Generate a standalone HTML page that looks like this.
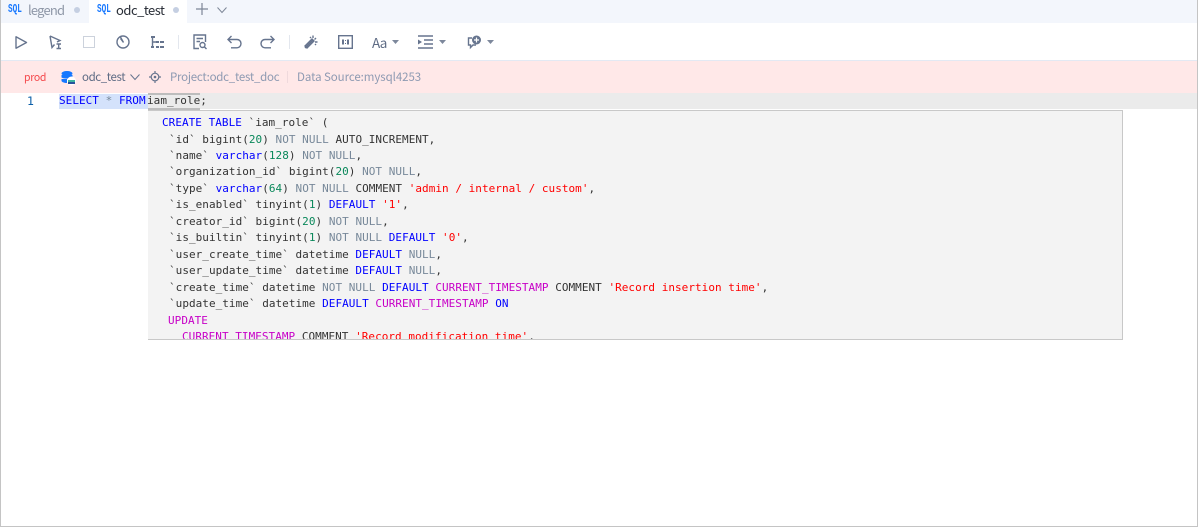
<!DOCTYPE html>
<html>
<head>
<meta charset="utf-8">
<style>
html,body{margin:0;padding:0;width:1198px;height:527px;overflow:hidden;background:#fff}
#r{position:relative;width:1198px;height:527px;overflow:hidden;font-family:"Noto Sans CJK SC","Liberation Sans",sans-serif;background:#fff}
.a{position:absolute}
.t{position:absolute;white-space:pre}
.m{font-family:"DejaVu Sans Mono","Liberation Mono",monospace;font-size:11px;line-height:16px;color:#333;letter-spacing:.035px}
.k{color:#0000ff}.g{color:#778899}.n{color:#09885a}.s{color:#ff0000}.p{color:#c700c7}
.q{font:bold 12px/13px "Liberation Mono",monospace;color:#1677ff;transform:scaleX(.64);transform-origin:0 0}
svg{position:absolute;overflow:visible}
.i{fill:none;stroke:#66748e;stroke-width:1.4}
</style>
</head>
<body>
<div id="r">
<!-- tabs -->
<div class="a" style="left:0;top:0;width:1198px;height:23px;background:#f3f6fc"></div>
<div class="a" style="left:89px;top:0;width:98px;height:23px;background:#fff"></div>
<div class="t q" style="left:8px;top:3px">SQL</div>
<div class="t" style="left:28px;top:1px;font-size:13px;line-height:18px;letter-spacing:-.8px;color:#8f98a8">legend</div>
<div class="a" style="left:74px;top:7px;width:6px;height:6px;border-radius:50%;background:#c5cfe2"></div>
<div class="t q" style="left:97px;top:3px">SQL</div>
<div class="t" style="left:116px;top:1px;font-size:13px;line-height:18px;letter-spacing:-.5px;color:#2a2f38">odc_test</div>
<div class="a" style="left:173px;top:7px;width:6px;height:6px;border-radius:50%;background:#c5cfe2"></div>
<svg style="left:196px;top:3px" width="12" height="12"><path d="M6 0V12M0 6H12" stroke="#7d8697" stroke-width="1.2" fill="none"/></svg>
<svg style="left:217px;top:7px" width="10" height="6"><path d="M.5 .5L5 5.500L9.500 .5" stroke="#7d8697" stroke-width="1" fill="none"/></svg>

<!-- toolbar icons -->
<svg style="left:15px;top:36px" width="12" height="13"><path class="i" d="M1 .8L11.500 6.500L1 12.200Z" stroke-linejoin="round"/></svg>
<svg style="left:49px;top:35px" width="13" height="14"><path class="i" d="M1 1L11 5.500L8 7M1 1L3 12.500L5.500 9.500"/><path class="i" d="M7.500 9H12M9.700 9V13.500M7.500 13.500H12" stroke-width="1"/></svg>
<div class="a" style="left:83px;top:36px;width:10px;height:10px;border:1px solid #ccd2dc"></div>
<svg style="left:116px;top:35px" width="14" height="14"><circle class="i" cx="7" cy="7" r="6"/><path class="i" d="M4.500 3.500L7.500 7.500L4 1.200"/></svg>
<svg style="left:151px;top:36px" width="13" height="13"><path d="M0 0H4V2H0ZM0 10H3V12H0ZM5 5H8V7H5ZM9 5H13V7H9ZM5 10H8V12H5ZM9 10H13V12H9Z" fill="#66748e"/><path class="i" d="M1.500 2V11M1.500 6H5"/></svg>
<div class="a" style="left:178px;top:35px;width:1px;height:14px;background:#e3e7ee"></div>
<svg style="left:193px;top:34px" width="14" height="16"><path class="i" d="M6 14.500H1V1H12.500V8"/><path class="i" d="M3.500 4.500H10M3.500 7.500H7"/><circle class="i" cx="9.500" cy="11" r="2.500"/><path class="i" d="M11.500 13L13.500 15"/></svg>
<svg style="left:227px;top:35px" width="15" height="14"><path class="i" d="M4.500 1L1 4.500L4.500 8M1 4.500H10C12 4.500 14 6 14 8.500C14 11 12 12.800 10 12.800H4"/></svg>
<svg style="left:260px;top:35px" width="15" height="14"><path class="i" d="M10.500 1L14 4.500L10.500 8M14 4.500H5C3 4.500 1 6 1 8.500C1 11 3 12.800 5 12.800H11"/></svg>
<div class="a" style="left:289px;top:35px;width:1px;height:14px;background:#e3e7ee"></div>
<svg style="left:304px;top:35px" width="14" height="14"><path class="i" d="M1 13L9 5M3 13L10 6L8 4L1 11Z" stroke-width="1.100"/><path class="i" d="M9 .5V3M12 3L10.500 4.500M13.500 7H11M6 2L7 3M12 10L11 9" stroke-width="1"/></svg>
<svg style="left:338px;top:35px" width="15" height="14"><rect x=".7" y=".7" width="13.600" height="12.600" fill="none" stroke="#66748e" stroke-width="1.400"/><path d="M4 4.500H6V9.500H4ZM9 4.500H11V9.500H9ZM7 5H8V6H7ZM7 8H8V9H7Z" fill="#66748e"/></svg>
<div class="t" style="left:372px;top:33px;font-size:13.500px;line-height:19px;letter-spacing:-.8px;color:#5f6c85">Aa</div>
<svg style="left:392px;top:40px" width="7" height="4"><path d="M0 0H7L3.500 4Z" fill="#7d889c"/></svg>
<svg style="left:418px;top:35px" width="15" height="14"><path class="i" d="M0 1H15M6 5H15M6 9H15M0 13H15"/><path d="M0 4.500L4 7L0 9.500Z" fill="#66748e"/></svg>
<svg style="left:439px;top:40px" width="7" height="4"><path d="M0 0H7L3.500 4Z" fill="#7d889c"/></svg>
<svg style="left:467px;top:35px" width="15" height="14"><path class="i" d="M5 3H1.500V10H3.500V12.500L6 10H9"/><circle cx="9.500" cy="5" r="4.500" fill="#66748e"/><path d="M9.500 2.500V7.500M7 5H12" stroke="#fff" stroke-width="1.200"/></svg>
<svg style="left:487px;top:40px" width="7" height="4"><path d="M0 0H7L3.500 4Z" fill="#7d889c"/></svg>

<!-- info bar -->
<div class="a" style="left:1px;top:60px;width:1197px;height:1px;background:#e3e9f3"></div>
<div class="a" style="left:1px;top:61px;width:1197px;height:32px;background:#ffe8e8"></div>
<div class="t" style="left:24px;top:70px;font-size:10.500px;line-height:16px;letter-spacing:-.3px;color:#f5494c">prod</div>
<svg style="left:61px;top:71px" width="16" height="15"><ellipse cx="6" cy="2.500" rx="5.500" ry="2.500" fill="#1677ff"/><path d="M.5 4H11.500V6.500C9 8 3 8 .5 6.500ZM.5 8H6V12C3 12 1 11 .5 10Z" fill="#1677ff"/><circle cx="10.500" cy="10" r="4.500" fill="#fff"/><path d="M7 9H14V11H7Z" fill="#3cb4a0"/><path d="M7 11H14V13H7Z" fill="#27539c"/></svg>
<div class="t" style="left:82px;top:69px;font-size:11.500px;line-height:17px;letter-spacing:-.4px;color:#5f6c85">odc_test</div>
<svg style="left:130px;top:74px" width="10" height="6"><path d="M.5 .5L5 5.500L9.500 .5" stroke="#66748e" stroke-width="1" fill="none"/></svg>
<svg style="left:149px;top:71px" width="12" height="12"><circle cx="6" cy="6" r="3.800" fill="none" stroke="#66748e" stroke-width="1.200"/><circle cx="6" cy="6" r="1.300" fill="#66748e"/><path d="M6 0V2M6 10V12M0 6H2M10 6H12" stroke="#66748e" stroke-width="1.200"/></svg>
<div class="t" style="left:170px;top:69px;font-size:11.500px;line-height:17px;letter-spacing:-.25px;color:#8e9ab2">Project:odc_test_doc</div>
<div class="a" style="left:287px;top:71px;width:1px;height:12px;background:#efd9dc"></div>
<div class="t" style="left:297px;top:69px;font-size:11.500px;line-height:17px;letter-spacing:-.07px;color:#8e9ab2">Data Source:mysql4253</div>

<!-- editor -->
<div class="a" style="left:148px;top:93px;width:1049px;height:16px;background:#ebebeb"></div>
<div class="a" style="left:59px;top:94px;width:89px;height:15px;background:#d4e2fb"></div>
<div class="a" style="left:148px;top:93px;width:52px;height:2px;background:#bdbdbd"></div>
<div class="a" style="left:148px;top:108px;width:52px;height:2px;background:#bdbdbd"></div>
<div class="t m" style="left:27px;top:93px;color:#0b5fa8;font-size:11.500px">1</div>
<div class="t m" style="left:59px;top:93px"><span class="k">SELECT</span> <span class="g">*</span> <span class="k">FROM</span></div>
<div class="t m" style="left:147px;top:93px">iam_role;</div>

<!-- hover popup -->
<div class="a" style="left:148px;top:110px;width:975px;height:230px;background:#f3f3f3;border-top:1px solid #c8c8c8;border-right:1px solid #c8c8c8;border-bottom:1px solid #c8c8c8;box-sizing:border-box;overflow:hidden">
<div class="t m" style="left:14px;top:4px"><span class="k">CREATE TABLE</span> `iam_role` (</div>
<div class="t m" style="left:21px;top:21px">`id` bigint(<span class="n">20</span>) <span class="g">NOT NULL</span> AUTO_INCREMENT,</div>
<div class="t m" style="left:21px;top:37px">`name` <span class="k">varchar</span>(<span class="n">128</span>) <span class="g">NOT NULL</span>,</div>
<div class="t m" style="left:21px;top:53px">`organization_id` bigint(<span class="n">20</span>) <span class="g">NOT NULL</span>,</div>
<div class="t m" style="left:21px;top:70px">`type` <span class="k">varchar</span>(<span class="n">64</span>) <span class="g">NOT NULL</span> COMMENT <span class="s">'admin / internal / custom'</span>,</div>
<div class="t m" style="left:21px;top:86px">`is_enabled` tinyint(<span class="n">1</span>) <span class="k">DEFAULT</span> <span class="s">'1'</span>,</div>
<div class="t m" style="left:21px;top:103px">`creator_id` bigint(<span class="n">20</span>) <span class="g">NOT NULL</span>,</div>
<div class="t m" style="left:21px;top:119px">`is_builtin` tinyint(<span class="n">1</span>) <span class="g">NOT NULL</span> <span class="k">DEFAULT</span> <span class="s">'0'</span>,</div>
<div class="t m" style="left:21px;top:136px">`user_create_time` datetime <span class="k">DEFAULT</span> <span class="g">NULL</span>,</div>
<div class="t m" style="left:21px;top:152px">`user_update_time` datetime <span class="k">DEFAULT</span> <span class="g">NULL</span>,</div>
<div class="t m" style="left:21px;top:169px">`create_time` datetime <span class="g">NOT NULL</span> <span class="k">DEFAULT</span> <span class="p">CURRENT_TIMESTAMP</span> COMMENT <span class="s">'Record insertion time'</span>,</div>
<div class="t m" style="left:21px;top:185px">`update_time` datetime <span class="k">DEFAULT</span> <span class="p">CURRENT_TIMESTAMP</span> <span class="k">ON</span></div>
<div class="t m" style="left:20px;top:202px"><span class="p">UPDATE</span></div>
<div class="t m" style="left:34px;top:218px"><span class="p">CURRENT_TIMESTAMP</span> COMMENT <span class="s">'Record modification time'</span>,</div>
</div>

<!-- outer border -->
<div class="a" style="left:0;top:0;width:1px;height:527px;background:#c4c4c4"></div>
<div class="a" style="left:1197px;top:0;width:1px;height:527px;background:#c4c4c4"></div>
<div class="a" style="left:0;top:526px;width:1198px;height:1px;background:#c4c4c4"></div>
</div>
</body>
</html>
